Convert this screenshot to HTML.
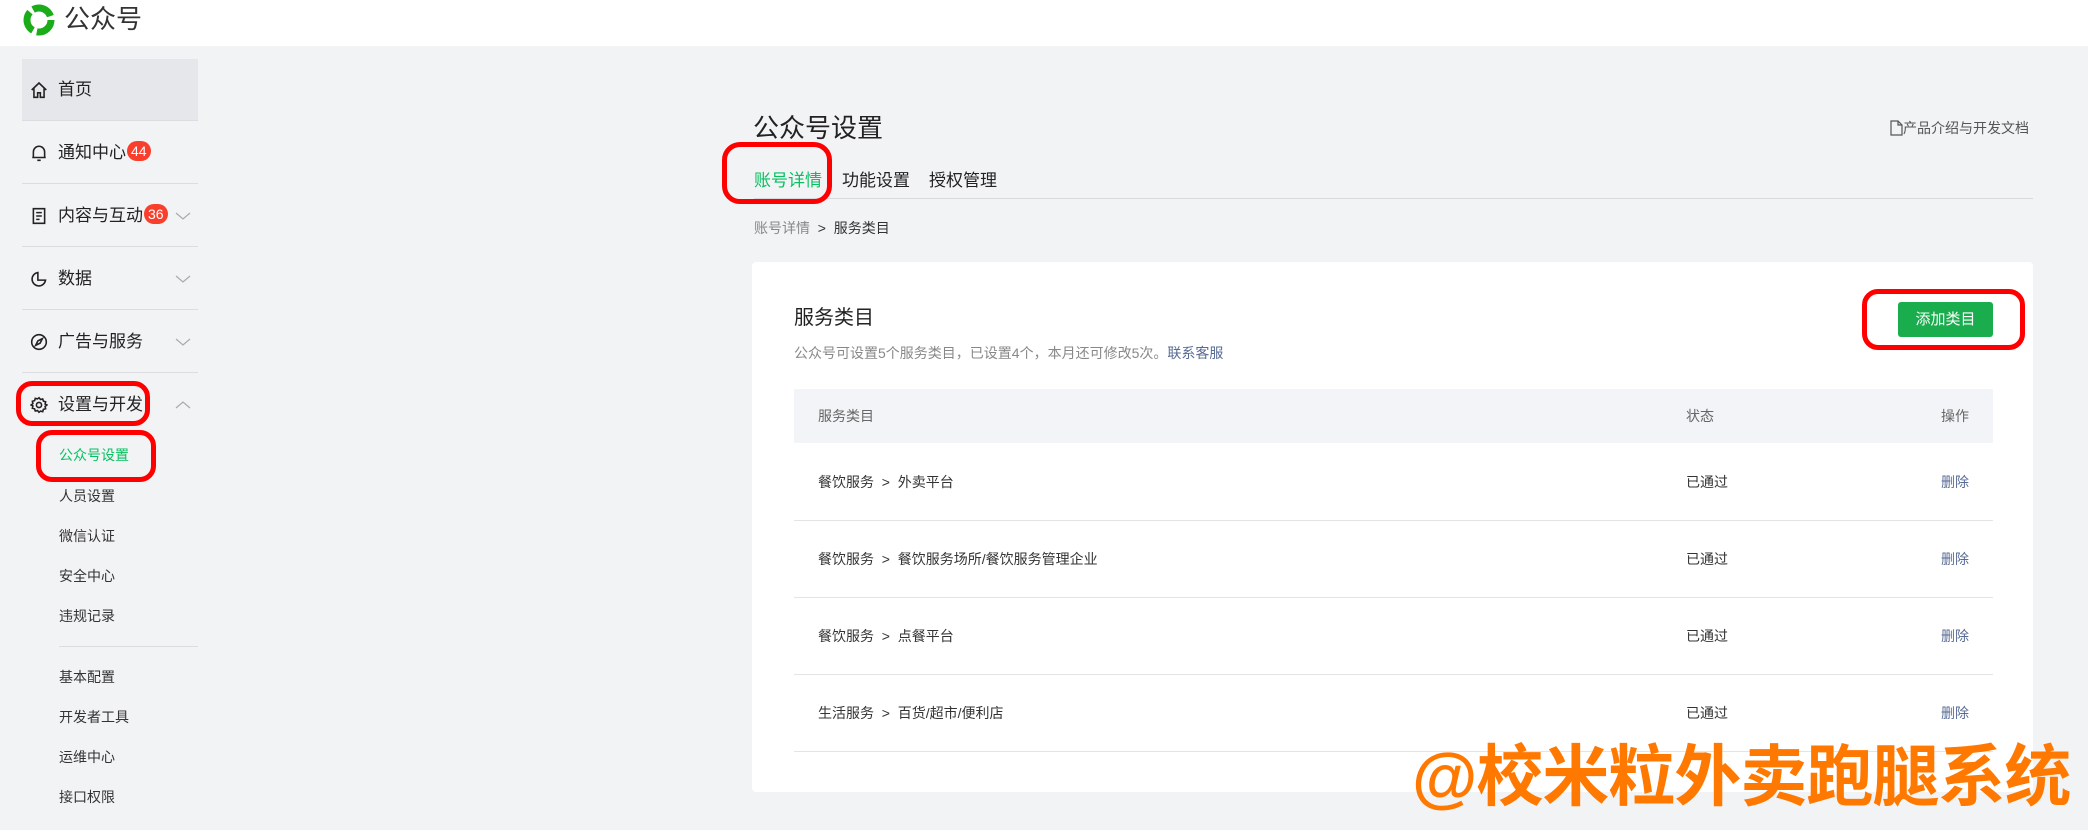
<!DOCTYPE html>
<html><head><meta charset="utf-8"><style>
*{margin:0;padding:0;box-sizing:border-box}
body{width:2088px;height:830px;background:#f2f3f5;font-family:"Liberation Sans","Noto Sans CJK SC",sans-serif;color:#333;position:relative;overflow:hidden}
.a{position:absolute;white-space:nowrap}
.hdr{left:0;top:0;width:2088px;height:46px;background:#fff}
.item{left:22px;width:176px;height:62px;border-bottom:1px solid #dcdde0;font-size:17px;color:#222;line-height:62px;padding-left:36px}
.item svg.ic{position:absolute;left:8px;top:22px}
.chev{position:absolute;left:153px;top:26px}
.badge{display:inline-block;background:#fa3e2c;color:#fff;font-size:14px;line-height:20px;height:20px;padding:0 4px;border-radius:10px;vertical-align:2px;margin-left:1px}
.sub{left:59px;font-size:14px;color:#333;transform:translateY(-50%)}
.red{border:5px solid #f00;border-radius:16px}
.row{left:794px;width:1199px;height:77px;border-bottom:1px solid #e3e4e6;font-size:14px;line-height:77px;color:#333}
.row span{position:absolute}
</style></head><body>
<div class="a hdr"></div>
<svg class="a" style="left:21px;top:3px" width="36" height="34" viewBox="0 0 36 34"><circle cx="18" cy="17" r="12" fill="none" stroke="#1aad19" stroke-width="7" stroke-dasharray="21 4"/></svg>
<div class="a" style="left:64px;top:4px;font-size:26px;color:#333;line-height:30px">公众号</div>

<div class="a" style="left:22px;top:59px;width:176px;height:62px;background:#e6e7ea"></div>
<div class="a item" style="top:59px"><svg class="ic" width="18" height="18" viewBox="0 0 16 16" fill="none" stroke="#222" stroke-width="1.4"><path d="M1.5 8 8 1.8 14.5 8M3.5 6.5V14.5h3.3v-4h2.4v4h3.3V6.5"/></svg>首页</div>
<div class="a item" style="top:122px"><svg class="ic" width="18" height="18" viewBox="0 0 16 16" fill="none" stroke="#222" stroke-width="1.4"><path d="M3 12V7a5 5 0 0 1 10 0v5H2h12M6.5 14.5h3"/></svg>通知中心<span class="badge">44</span></div>
<div class="a item" style="top:185px"><svg class="ic" width="18" height="18" viewBox="0 0 16 16" fill="none" stroke="#222" stroke-width="1.4"><path d="M3 1.5h10v13H3zM5.5 5h5M5.5 8h5M5.5 11h3"/></svg>内容与互动<span class="badge">36</span><svg class="chev" width="16" height="10" viewBox="0 0 16 10" fill="none" stroke="#aaa" stroke-width="1.2"><path d="M1 2l7 6 7-6"/></svg></div>
<div class="a item" style="top:248px"><svg class="ic" width="18" height="18" viewBox="0 0 16 16" fill="none" stroke="#222" stroke-width="1.4"><path d="M7 2.2a6 6 0 1 0 6.8 6.8H7z"/></svg>数据<svg class="chev" width="16" height="10" viewBox="0 0 16 10" fill="none" stroke="#aaa" stroke-width="1.2"><path d="M1 2l7 6 7-6"/></svg></div>
<div class="a item" style="top:311px"><svg class="ic" width="18" height="18" viewBox="0 0 16 16" fill="none" stroke="#222" stroke-width="1.4"><circle cx="8" cy="8" r="6.5"/><path d="M11 5 9 9 5 11 7 7z"/></svg>广告与服务<svg class="chev" width="16" height="10" viewBox="0 0 16 10" fill="none" stroke="#aaa" stroke-width="1.2"><path d="M1 2l7 6 7-6"/></svg></div>
<div class="a item" style="top:374px;border:none"><svg class="ic" width="18" height="18" viewBox="0 0 16 16" fill="none" stroke="#222" stroke-width="1.4"><circle cx="8" cy="8" r="2.3"/><path d="M8 1.5l1.3 1.6 2-.5.6 2 2 .6-.5 2L15 8l-1.6 1.3.5 2-2 .6-.6 2-2-.5L8 14.5l-1.3-1.6-2 .5-.6-2-2-.6.5-2L1 8l1.6-1.3-.5-2 2-.6.6-2 2 .5z"/></svg>设置与开发<svg class="chev" width="16" height="10" viewBox="0 0 16 10" fill="none" stroke="#aaa" stroke-width="1.2"><path d="M1 8l7-6 7 6"/></svg></div>
<div class="a red" style="left:16px;top:381px;width:134px;height:45px"></div>
<div class="a sub" style="top:455px;color:#07c160">公众号设置</div>
<div class="a red" style="left:36px;top:430px;width:120px;height:52px"></div>
<div class="a sub" style="top:496px">人员设置</div>
<div class="a sub" style="top:536px">微信认证</div>
<div class="a sub" style="top:576px">安全中心</div>
<div class="a sub" style="top:616px">违规记录</div>
<div class="a" style="left:59px;top:646px;width:139px;height:1px;background:#dcdde0"></div>
<div class="a sub" style="top:677px">基本配置</div>
<div class="a sub" style="top:717px">开发者工具</div>
<div class="a sub" style="top:757px">运维中心</div>
<div class="a sub" style="top:797px">接口权限</div>

<div class="a" style="left:753px;top:112px;font-size:26px;color:#222;line-height:32px">公众号设置</div>
<div class="a" style="left:1890px;top:118px;font-size:14px;color:#555;line-height:20px"><svg width="13" height="16" viewBox="0 0 13 16" fill="none" stroke="#555" stroke-width="1.2" style="vertical-align:-3px"><path d="M1 1h7l4 4v10H1zM8 1v4h4"/></svg>产品介绍与开发文档</div>
<div class="a" style="left:754px;top:170px;font-size:17px;line-height:22px;color:#07c160">账号详情</div>
<div class="a" style="left:842px;top:170px;font-size:17px;line-height:22px;color:#222">功能设置</div>
<div class="a" style="left:929px;top:170px;font-size:17px;line-height:22px;color:#222">授权管理</div>
<div class="a" style="left:754px;top:198px;width:1279px;height:1px;background:#d8d9dc"></div>
<div class="a red" style="left:722px;top:142px;width:110px;height:62px;border-radius:18px"></div>
<div class="a" style="left:754px;top:218px;font-size:14px;line-height:20px;color:#888">账号详情 <span style="color:#333">&nbsp;&gt;&nbsp; 服务类目</span></div>

<div class="a" style="left:752px;top:262px;width:1281px;height:530px;background:#fff;border-radius:4px"></div>
<div class="a" style="left:794px;top:305px;font-size:20px;line-height:26px;color:#222">服务类目</div>
<div class="a" style="left:794px;top:343px;font-size:14px;line-height:20px;color:#888">公众号可设置5个服务类目，已设置4个，本月还可修改5次。<span style="color:#576b95">联系客服</span></div>
<div class="a" style="left:1898px;top:302px;width:95px;height:35px;background:#1aad4e;border-radius:3px;color:#fff;font-size:15px;line-height:35px;text-align:center">添加类目</div>
<div class="a red" style="left:1862px;top:289px;width:163px;height:61px"></div>

<div class="a" style="left:794px;top:389px;width:1199px;height:54px;background:#f2f4f7;font-size:14px;line-height:54px;color:#666">
<span class="a" style="left:24px">服务类目</span><span class="a" style="left:892px">状态</span><span class="a" style="left:1147px">操作</span></div>
<div class="a row" style="top:444px"><span style="left:24px">餐饮服务 &nbsp;&gt;&nbsp; 外卖平台</span><span style="left:892px">已通过</span><span style="left:1147px;color:#576b95">删除</span></div>
<div class="a row" style="top:521px"><span style="left:24px">餐饮服务 &nbsp;&gt;&nbsp; 餐饮服务场所/餐饮服务管理企业</span><span style="left:892px">已通过</span><span style="left:1147px;color:#576b95">删除</span></div>
<div class="a row" style="top:598px"><span style="left:24px">餐饮服务 &nbsp;&gt;&nbsp; 点餐平台</span><span style="left:892px">已通过</span><span style="left:1147px;color:#576b95">删除</span></div>
<div class="a row" style="top:675px"><span style="left:24px">生活服务 &nbsp;&gt;&nbsp; 百货/超市/便利店</span><span style="left:892px">已通过</span><span style="left:1147px;color:#576b95">删除</span></div>

<div class="a" style="left:1412px;top:738px;font-size:67px;font-weight:bold;line-height:80px;color:#ff7800;letter-spacing:-1px">@校米粒外卖跑腿系统</div>
</body></html>
